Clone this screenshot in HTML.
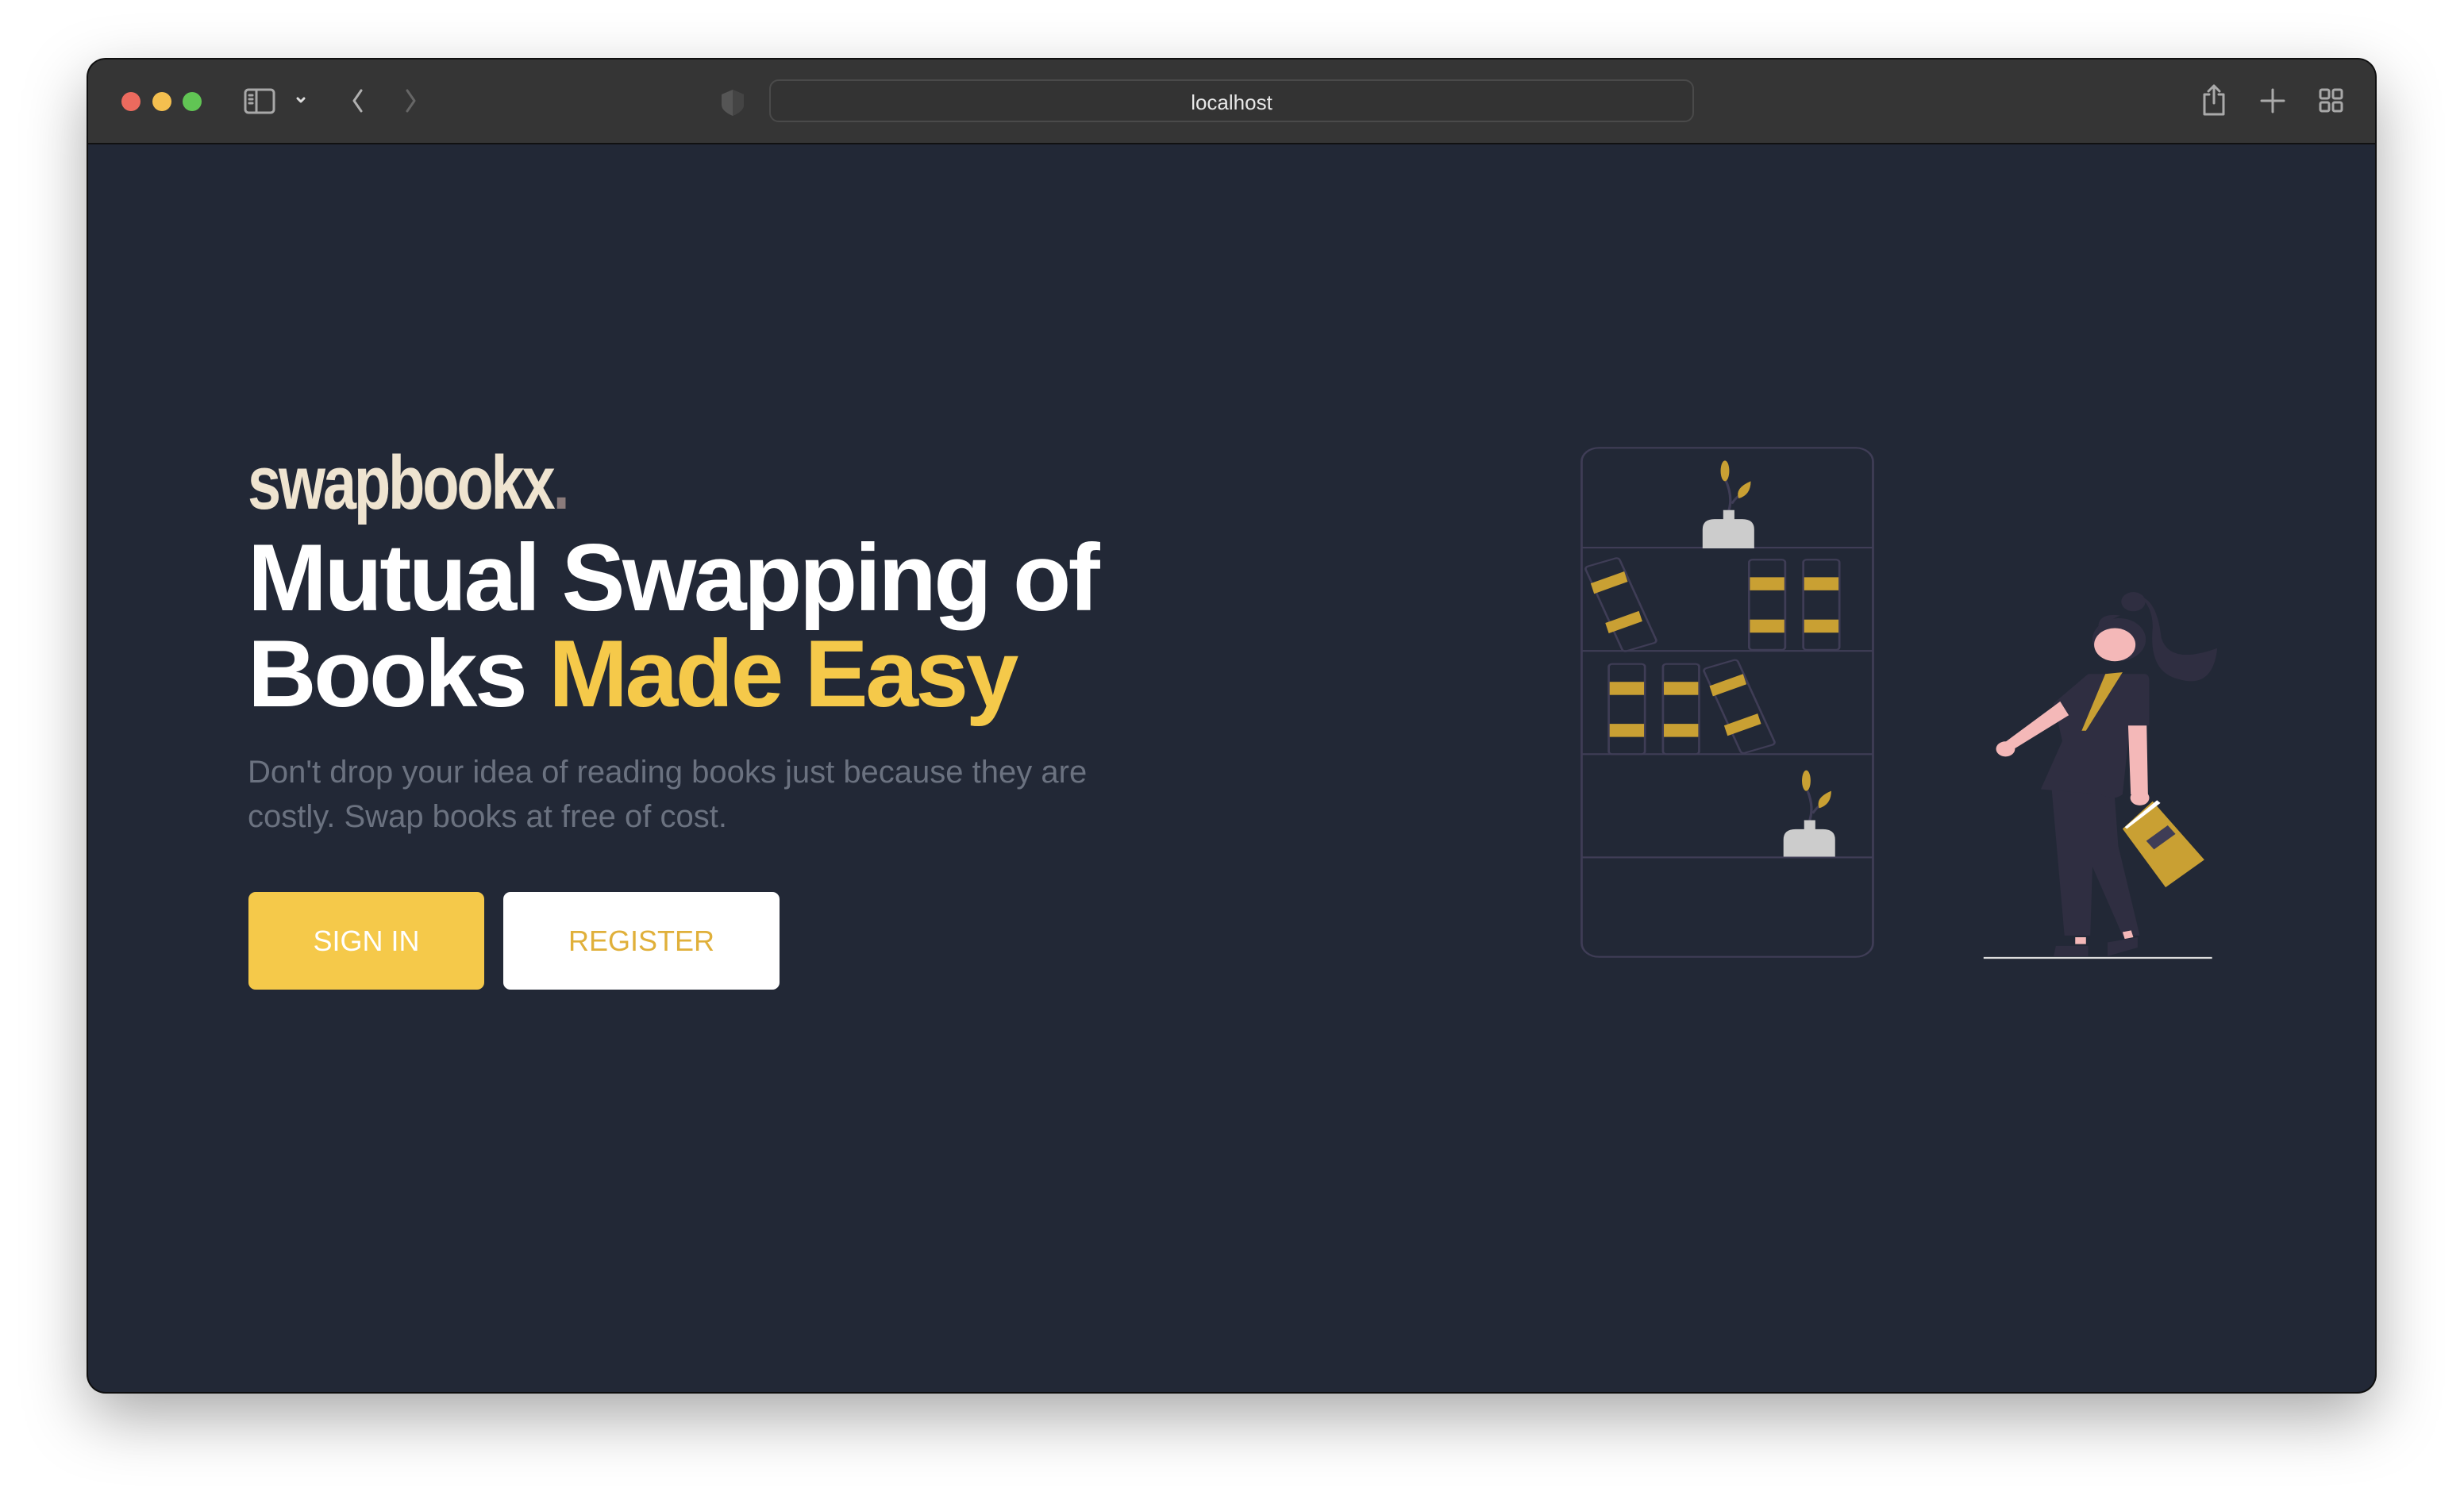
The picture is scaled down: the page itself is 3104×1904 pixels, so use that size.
<!DOCTYPE html>
<html><head><meta charset="utf-8"><style>
html,body{margin:0;padding:0;width:3104px;height:1904px;background:#fff;overflow:hidden;font-family:"Liberation Sans",sans-serif;}
.win{position:absolute;left:111px;top:75px;width:2881px;height:1679px;border-radius:22px;background:#222836;overflow:hidden;box-shadow:0 30px 80px rgba(0,0,0,.35),0 0 0 2px #111;}
.bar{position:absolute;left:0;top:0;width:100%;height:105px;background:#353535;border-bottom:2px solid #111;}
.dot{position:absolute;top:41px;width:24px;height:24px;border-radius:50%;}
.url{position:absolute;left:858px;top:25px;width:1165px;height:54px;border:2px solid #4a4a4a;border-radius:12px;box-sizing:border-box;background:#333;}
.url span{position:absolute;left:0;right:0;top:12px;text-align:center;color:#e8e8e8;font-size:26px;}
.abs{position:absolute;}
.logo{position:absolute;left:312px;top:554px;font-family:"Liberation Sans Narrow","Liberation Sans",sans-serif;font-weight:bold;font-size:96px;letter-spacing:-4px;transform:scaleX(.79);transform-origin:left;color:#efe4d0;}
h1{position:absolute;left:312px;top:668px;margin:0;font-size:120px;line-height:121px;font-weight:bold;color:#fff;letter-spacing:-3.5px;}
h1 .y{color:#f5c94a;}
p{position:absolute;left:312px;top:945px;margin:0;width:1110px;font-size:40px;line-height:56px;color:#6b7280;}
.btn{position:absolute;top:1124px;height:123px;border-radius:9px;font-size:36px;text-align:center;line-height:123px;}
</style></head><body>
<div class="win">
 <div class="bar">
  <div class="dot" style="left:42px;background:#ec6a5e"></div>
  <div class="dot" style="left:81px;background:#f4bf4f"></div>
  <div class="dot" style="left:119px;background:#61c554"></div>
  <svg class="abs" style="left:0;top:0" width="2881" height="105">
   <g fill="none" stroke="#a8a8a8" stroke-width="3" stroke-linecap="round" stroke-linejoin="round">
    <rect x="198" y="38" width="36" height="29" rx="4"/><line x1="212" y1="38" x2="212" y2="67"/>
    <line x1="203" y1="45" x2="207" y2="45"/><line x1="203" y1="50" x2="207" y2="50"/><line x1="203" y1="55" x2="207" y2="55"/>
    <path d="M264 49 l4 4 l4 -4" stroke="#ddd"/>
    <path d="M344 39 l-9 13 l9 13" stroke="#b0b0b0"/>
    <path d="M402 39 l9 13 l-9 13" stroke="#666"/>
    <path d="M2000 45 a11 11 0 1 0 4 9 M2000 38 v8 h-7" stroke="#ccc" stroke-width="2.5"/>
    <path d="M2672 44 h-6 v25 h24 v-25 h-6 M2678 55 v-22 M2671 40 l7 -7 l7 7" stroke="#aaa"/>
    <path d="M2752 38 v28 M2738 52 h28" stroke="#aaa"/>
    <rect x="2812" y="38" width="11" height="11" rx="2"/><rect x="2828" y="38" width="11" height="11" rx="2"/>
    <rect x="2812" y="54" width="11" height="11" rx="2"/><rect x="2828" y="54" width="11" height="11" rx="2"/>
   </g>
   <path d="M812 38 l14 6 v13 q0 8 -14 14 q-14 -6 -14 -14 v-13 z" fill="#555"/>
   <path d="M812 38 l14 6 v13 q0 8 -14 14 z" fill="#444"/>
  </svg>
  <div class="url"><span>localhost</span></div>
 </div>
</div>
<div class="logo">swapbookx<span style="color:#8b7b7b">.</span></div>
<h1>Mutual Swapping of<br>Books <span class="y">Made Easy</span></h1>
<p>Don't drop your idea of reading books just because they are costly. Swap books at free of cost.</p>
<div class="btn" style="left:313px;width:297px;background:#f5c94a;color:#fff">SIGN IN</div>
<div class="btn" style="left:634px;width:348px;background:#fff;color:#e0b03a">REGISTER</div>
<svg class="abs" style="left:1980px;top:550px" width="850" height="680" viewBox="0 0 1568 1568" preserveAspectRatio="none">
 <g fill="none" stroke="#3f3d56" stroke-width="5">
  <rect x="23" y="33" width="677" height="1479" rx="40"/>
  <line x1="23" y1="323" x2="700" y2="323"/><line x1="23" y1="623" x2="700" y2="623"/>
  <line x1="23" y1="923" x2="700" y2="923"/><line x1="23" y1="1223" x2="700" y2="1223"/>
  <rect x="412" y="358" width="84" height="262" rx="8"/><rect x="538" y="358" width="84" height="262" rx="8"/>
  <rect x="86" y="661" width="84" height="262" rx="8"/><rect x="212" y="661" width="84" height="262" rx="8"/>
  <rect x="30" y="380" width="84" height="262" rx="8" transform="rotate(-20 30 380)"/>
  <rect x="305" y="676" width="84" height="262" rx="8" transform="rotate(-20 305 676)"/>
  <path d="M365 215 q10 -40 -8 -90 M372 195 q10 -20 30 -35" stroke-width="6"/>
  <path d="M553 1115 q10 -40 -5 -85 M560 1095 q10 -20 30 -35" stroke-width="6"/>
 </g>
 <g fill="#c9a033">
  <rect x="414" y="409" width="80" height="38"/><rect x="414" y="532" width="80" height="38"/>
  <rect x="540" y="409" width="80" height="38"/><rect x="540" y="532" width="80" height="38"/>
  <rect x="88" y="713" width="80" height="38"/><rect x="88" y="835" width="80" height="38"/>
  <rect x="214" y="713" width="80" height="38"/><rect x="214" y="835" width="80" height="38"/>
  <path d="M44 427 l78 -35 l8 30 l-78 35z M78 542 l78 -35 l8 30 l-78 35z"/>
  <path d="M320 725 l78 -35 l8 30 l-78 35z M354 840 l78 -35 l8 30 l-78 35z"/>
  <ellipse cx="356" cy="100" rx="10" ry="30"/><path d="M388 180 q-10 -30 28 -50 q0 40 -28 50z"/>
  <ellipse cx="545" cy="1000" rx="10" ry="30"/><path d="M575 1080 q-10 -30 28 -50 q0 40 -28 50z"/>
 </g>
 <g fill="#cccccc">
  <path d="M352 214 h26 v26 h18 q28 0 28 30 v55 h-120 v-55 q0 -30 28 -30 h20z"/>
  <path d="M540 1115 h26 v26 h18 q28 0 28 30 v50 h-120 v-50 q0 -30 28 -30 h20z"/>
 </g>
 <line x1="957" y1="1515" x2="1488" y2="1515" stroke="#ddd" stroke-width="5"/>
 <g fill="#2f2e41">
  <circle cx="1305" cy="480" r="28"/>
  <path d="M1320 465 q40 10 50 120 q20 80 130 30 q-10 120 -90 90 q-70 -20 -60 -150 q0 -60 -30 -90z"/>
  <circle cx="1272" cy="590" r="62"/>
  <path d="M1125 1480 h75 v30 h-80z M1245 1470 l70 -15 v30 l-70 25z"/>
  <path d="M1115 1020 l30 430 h60 l5 -200 l70 200 h40 l-50 -260 l-10 -170z"/>
  <path d="M1200 690 h130 q12 0 12 20 v130 h-45 l-17 200 q-20 20 -50 0 l-140 -15 l50 -140 l-20 -110z"/>
 </g>
 <g fill="#f4b8b8">
  <circle cx="1262" cy="605" r="48"/>
  <path d="M1135 770 l20 40 l-130 100 l-20 -20z"/><circle cx="1008" cy="908" r="22"/>
  <path d="M1293 840 h43 l3 200 h-40z"/><circle cx="1320" cy="1050" r="22"/>
  <path d="M1170 1455 h25 v20 h-25z M1280 1440 l20 -5 l5 20 l-20 5z"/>
 </g>
 <path d="M1225 570 q-10 -60 50 -50 q-40 20 -50 50z" fill="#2f2e41"/>
 <path d="M1240 690 l40 -5 l-85 170 h-10z" fill="#c9a033"/>
 <path d="M1280 1140 l70 -80 l120 170 l-90 80z" fill="#c9a033"/>
 <path d="M1285 1135 l75 -78 l8 8 l-78 75z" fill="#fff"/>
 <path d="M1335 1175 l50 -45 l18 25 l-50 45z" fill="#3f3d56"/>
</svg>
</body></html>
